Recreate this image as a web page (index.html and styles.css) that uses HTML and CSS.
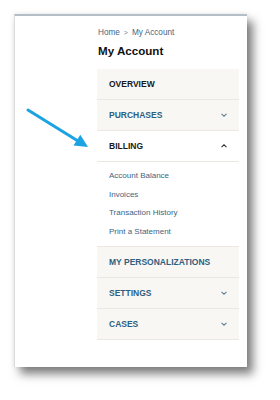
FILE: index.html
```html
<!DOCTYPE html>
<html>
<head>
<meta charset="utf-8">
<link rel="stylesheet" href="styles.css">
</head>
<body>
<div class="card">
  <nav class="crumbs"><span>Home</span><span class="sep">&gt;</span><span>My Account</span></nav>
  <h1 class="title">My Account</h1>
  <ul class="menu">
    <li class="row active">OVERVIEW</li>
    <li class="row">PURCHASES<svg class="chev" viewBox="0 0 6 4"><path d="M0.5 0.8 L3 3.2 L5.5 0.8" /></svg></li>
    <li class="row active open">BILLING<svg class="chev up" viewBox="0 0 6 4"><path d="M0.5 3.2 L3 0.8 L5.5 3.2" /></svg></li>
    <li class="sub">
      <a>Account Balance</a>
      <a>Invoices</a>
      <a>Transaction History</a>
      <a>Print a Statement</a>
    </li>
    <li class="row">MY PERSONALIZATIONS</li>
    <li class="row">SETTINGS<svg class="chev" viewBox="0 0 6 4"><path d="M0.5 0.8 L3 3.2 L5.5 0.8" /></svg></li>
    <li class="row">CASES<svg class="chev" viewBox="0 0 6 4"><path d="M0.5 0.8 L3 3.2 L5.5 0.8" /></svg></li>
  </ul>
</div>
<svg class="arrow" width="100" height="160" viewBox="0 0 100 160">
  <line x1="28" y1="110" x2="78" y2="141" stroke="#1ba3e2" stroke-width="3" stroke-linecap="round"/>
  <polygon points="88,147 73.5,145.5 80.3,134.8" fill="#1ba3e2"/>
</svg>
</body>
</html>
```

FILE: styles.css
```css
html, body {
  margin: 0;
  padding: 0;
  background: #ffffff;
}
body {
  position: relative;
  width: 280px;
  height: 400px;
  overflow: hidden;
  font-family: "Liberation Sans", Arial, sans-serif;
}
.card {
  margin: 14px 0 0 14px;
  width: 233px;
  height: 353px;
  box-sizing: border-box;
  background: #ffffff;
  border-top: 2px solid #b4bec6;
  border-left: 1px solid #dcdcdc;
  box-shadow: 6px 7px 9px rgba(0, 0, 0, 0.5), 0 0 5px rgba(0, 0, 0, 0.08);
  padding: 12px 0 0 82px;
}
.crumbs {
  display: flex;
  align-items: center;
  gap: 4px;
  font-size: 8.2px;
  line-height: 10px;
  height: 10px;
  color: #3f6682;
  padding-left: 1px;
}
.crumbs .sep {
  font-size: 7px;
  color: #6a8599;
}
.title {
  margin: 6px 0 0 1px;
  font-size: 11.6px;
  line-height: 14px;
  font-weight: bold;
  color: #111111;
}
.menu {
  list-style: none;
  margin: 11px 0 0 0;
  padding: 0;
  width: 142px;
}
.row {
  display: flex;
  align-items: center;
  justify-content: space-between;
  height: 30px;
  padding: 0 12px 0 12px;
  background: #f8f7f4;
  border-bottom: 1px solid #ebe8e2;
  font-size: 8.5px;
  font-weight: bold;
  color: #2f5f80;
}
.row.active {
  color: #1a1a1a;
}
.row.open {
  background: #ffffff;
}
.chev {
  width: 6px;
  height: 4px;
  fill: none;
  stroke: #5f8299;
  stroke-width: 1.1;
}
.chev.up {
  stroke: #333333;
}
.sub {
  display: flex;
  flex-direction: column;
  padding: 5px 12px 4px 12px;
  background: #ffffff;
  border-bottom: 1px solid #ebe8e2;
}
.sub a {
  font-size: 8px;
  line-height: 18.7px;
  height: 18.7px;
  color: #3d6584;
}
.arrow {
  position: absolute;
  left: 0;
  top: 0;
}
```
